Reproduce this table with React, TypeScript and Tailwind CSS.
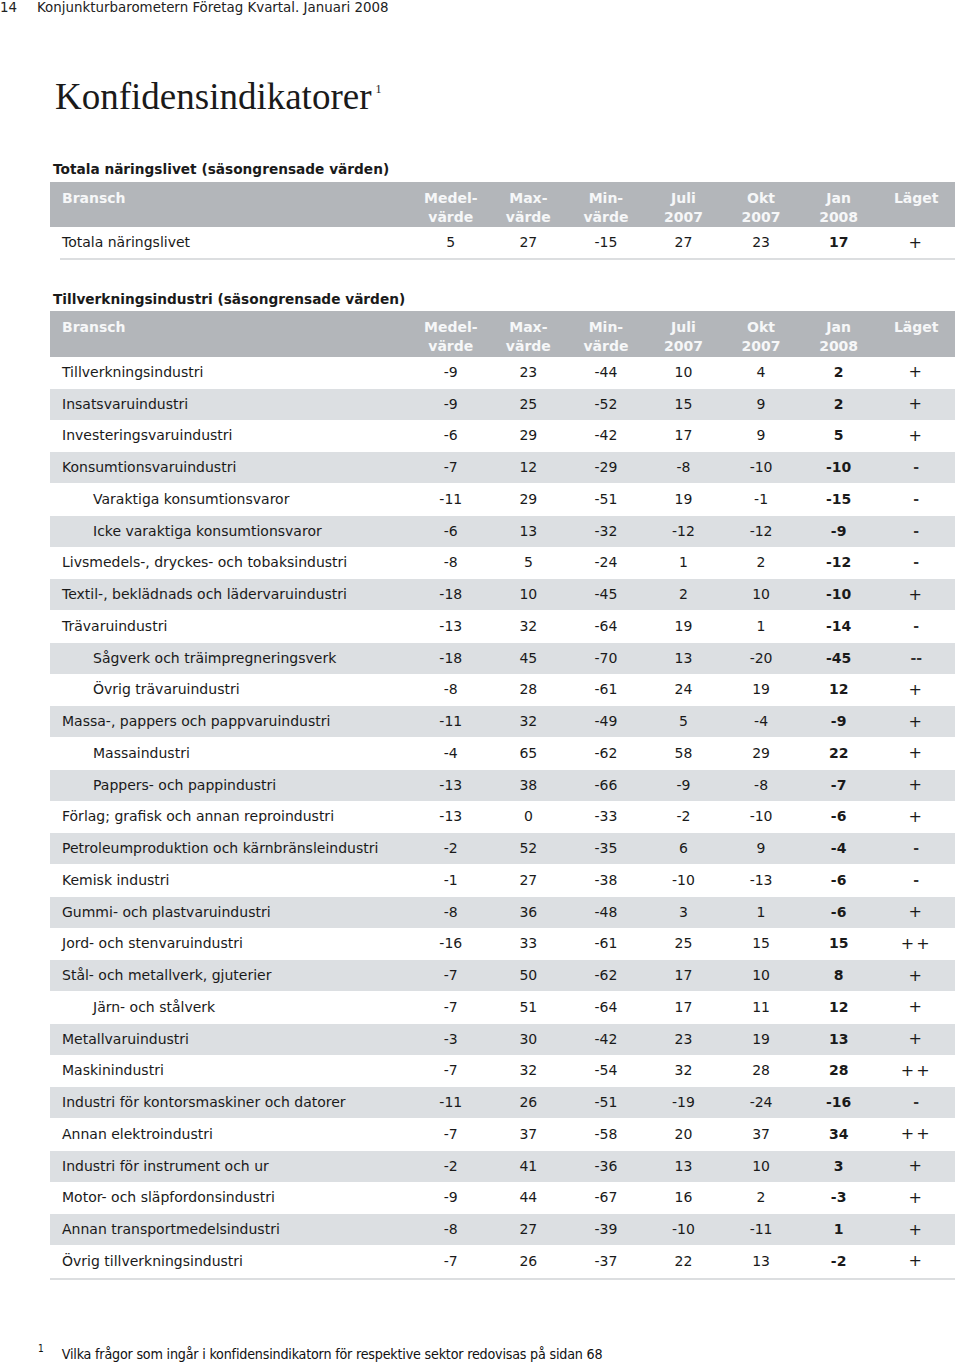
import React from "react";

type Row = { name: string; indent?: boolean; v: string[]; l: string };

const rows: Row[] = [
  { name: "Tillverkningsindustri", v: ["-9", "23", "-44", "10", "4", "2"], l: "+" },
  { name: "Insatsvaruindustri", v: ["-9", "25", "-52", "15", "9", "2"], l: "+" },
  { name: "Investeringsvaruindustri", v: ["-6", "29", "-42", "17", "9", "5"], l: "+" },
  { name: "Konsumtionsvaruindustri", v: ["-7", "12", "-29", "-8", "-10", "-10"], l: "-" },
  { name: "Varaktiga konsumtionsvaror", indent: true, v: ["-11", "29", "-51", "19", "-1", "-15"], l: "-" },
  { name: "Icke varaktiga konsumtionsvaror", indent: true, v: ["-6", "13", "-32", "-12", "-12", "-9"], l: "-" },
  { name: "Livsmedels-, dryckes- och tobaksindustri", v: ["-8", "5", "-24", "1", "2", "-12"], l: "-" },
  { name: "Textil-, beklädnads och lädervaruindustri", v: ["-18", "10", "-45", "2", "10", "-10"], l: "+" },
  { name: "Trävaruindustri", v: ["-13", "32", "-64", "19", "1", "-14"], l: "-" },
  { name: "Sågverk och träimpregneringsverk", indent: true, v: ["-18", "45", "-70", "13", "-20", "-45"], l: "--" },
  { name: "Övrig trävaruindustri", indent: true, v: ["-8", "28", "-61", "24", "19", "12"], l: "+" },
  { name: "Massa-, pappers och pappvaruindustri", v: ["-11", "32", "-49", "5", "-4", "-9"], l: "+" },
  { name: "Massaindustri", indent: true, v: ["-4", "65", "-62", "58", "29", "22"], l: "+" },
  { name: "Pappers- och pappindustri", indent: true, v: ["-13", "38", "-66", "-9", "-8", "-7"], l: "+" },
  { name: "Förlag; grafisk och annan reproindustri", v: ["-13", "0", "-33", "-2", "-10", "-6"], l: "+" },
  { name: "Petroleumproduktion och kärnbränsleindustri", v: ["-2", "52", "-35", "6", "9", "-4"], l: "-" },
  { name: "Kemisk industri", v: ["-1", "27", "-38", "-10", "-13", "-6"], l: "-" },
  { name: "Gummi- och plastvaruindustri", v: ["-8", "36", "-48", "3", "1", "-6"], l: "+" },
  { name: "Jord- och stenvaruindustri", v: ["-16", "33", "-61", "25", "15", "15"], l: "++" },
  { name: "Stål- och metallverk, gjuterier", v: ["-7", "50", "-62", "17", "10", "8"], l: "+" },
  { name: "Järn- och stålverk", indent: true, v: ["-7", "51", "-64", "17", "11", "12"], l: "+" },
  { name: "Metallvaruindustri", v: ["-3", "30", "-42", "23", "19", "13"], l: "+" },
  { name: "Maskinindustri", v: ["-7", "32", "-54", "32", "28", "28"], l: "++" },
  { name: "Industri för kontorsmaskiner och datorer", v: ["-11", "26", "-51", "-19", "-24", "-16"], l: "-" },
  { name: "Annan elektroindustri", v: ["-7", "37", "-58", "20", "37", "34"], l: "++" },
  { name: "Industri för instrument och ur", v: ["-2", "41", "-36", "13", "10", "3"], l: "+" },
  { name: "Motor- och släpfordonsindustri", v: ["-9", "44", "-67", "16", "2", "-3"], l: "+" },
  { name: "Annan transportmedelsindustri", v: ["-8", "27", "-39", "-10", "-11", "1"], l: "+" },
  { name: "Övrig tillverkningsindustri", v: ["-7", "26", "-37", "22", "13", "-2"], l: "+" },
];

const grid = "grid grid-cols-[362px_repeat(7,1fr)]";

function HeaderBand({ h }: { h: string }) {
  const cols: [string, string][] = [
    ["Medel-", "värde"],
    ["Max-", "värde"],
    ["Min-", "värde"],
    ["Juli", "2007"],
    ["Okt", "2007"],
    ["Jan", "2008"],
    ["Läget", ""],
  ];
  return (
    <div className={`${grid} ${h} bg-[#b3b6ba] pt-[7px] font-bold text-[#f6f7f8] leading-[19px]`}>
      <div className="pl-[12px]">Bransch</div>
      {cols.map((c, i) => (
        <div key={i} className="flex flex-col items-center">
          <span>{c[0]}</span>
          {c[1] && <span>{c[1]}</span>}
        </div>
      ))}
    </div>
  );
}

function Laget({ l }: { l: string }) {
  const isMinus = l.startsWith("-");
  return (
    <div className={`text-center ${isMinus ? "font-bold text-[#333]" : "text-[16px] tracking-[2px]"}`}>{l}</div>
  );
}

export default function App() {
  return (
    <div
      className="w-[960px] h-[1366px] bg-white text-[#1a1a1a] relative overflow-hidden"
      style={{ fontFamily: '"DejaVu Sans", Verdana, sans-serif' }}
    >
      <div className="flex text-[13.4px] leading-[16px] text-[#222]">
        <span className="w-[37px]">14</span>
        <span>Konjunkturbarometern Företag Kvartal. Januari 2008</span>
      </div>

      <div
        className="mt-[61px] ml-[55px] text-[37px] leading-[40px] text-[#1a1a1a] flex items-start"
        style={{ fontFamily: '"Liberation Serif", "Times New Roman", serif' }}
      >
        <span>Konfidensindikatorer</span>
        <span className="text-[12px] leading-[12px] ml-[4px] mt-[6px]">1</span>
      </div>

      <div className="mt-[43px] ml-[53px] text-[13.7px] font-bold leading-[18px]">
        Totala näringslivet (säsongrensade värden)
      </div>

      <div className="mt-[4px] ml-[50px] w-[905px] text-[14px]">
        <HeaderBand h="h-[45px]" />
        <div className={`${grid} h-[31px] items-center`}>
          <div className="pl-[12px]">Totala näringslivet</div>
          <div className="text-center">5</div>
          <div className="text-center">27</div>
          <div className="text-center">-15</div>
          <div className="text-center">27</div>
          <div className="text-center">23</div>
          <div className="text-center font-bold">17</div>
          <Laget l="+" />
        </div>
        <div className="ml-[10px] h-[2px] bg-[#dcdee0]" />
      </div>

      <div className="mt-[30px] ml-[53px] text-[13.7px] font-bold leading-[18px]">
        Tillverkningsindustri (säsongrensade värden)
      </div>

      <div className="mt-[3px] ml-[50px] w-[905px] text-[14px]">
        <HeaderBand h="h-[46px]" />
        {rows.map((r, i) => (
          <div
            key={i}
            className={`${grid} h-[31.75px] items-center border-b border-white ${i % 2 === 1 ? "bg-[#dcdfe2]" : "bg-white"}`}
          >
            <div className={r.indent ? "pl-[43px]" : "pl-[12px]"}>{r.name}</div>
            {r.v.map((x, j) => (
              <div key={j} className={`text-center ${j === 5 ? "font-bold" : ""}`}>
                {x}
              </div>
            ))}
            <Laget l={r.l} />
          </div>
        ))}
        <div className="h-[2px] bg-[#dcdee0]" />
      </div>

      <div
        className="absolute left-[38px] top-[1344px] flex items-start text-[14.2px] leading-[20px] text-[#111]"
        style={{ fontFamily: '"DejaVu Sans Condensed", "Liberation Sans", sans-serif' }}
      >
        <span className="text-[10px] leading-[10px] mr-[18px] mt-[0px]">1</span>
        <span className="tracking-[-0.2px]">
          Vilka frågor som ingår i konfidensindikatorn för respektive sektor redovisas på sidan 68
        </span>
      </div>
    </div>
  );
}
